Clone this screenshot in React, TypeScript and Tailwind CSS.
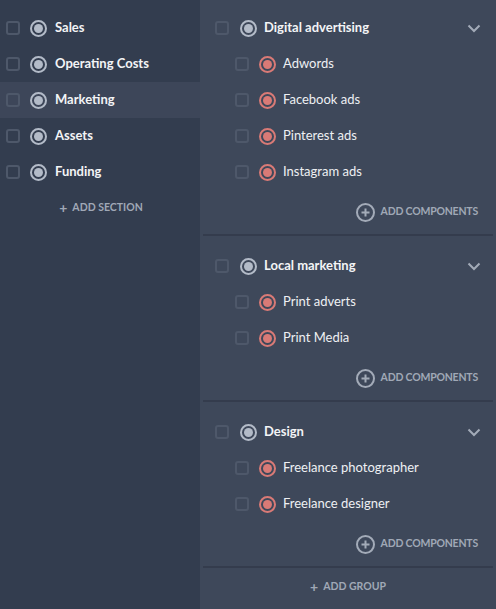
import React from "react";

const Check = () => (
  <div className="w-[14px] h-[14px] rounded-[3px] border-2 border-[#4e586a] shrink-0" />
);

const Radio = ({ red }: { red?: boolean }) => (
  <div
    className={`w-[17px] h-[17px] rounded-full border-2 flex items-center justify-center shrink-0 ${
      red ? "border-[#d97a76]" : "border-[#b3bbc8]"
    }`}
  >
    <div className={`w-[9px] h-[9px] rounded-full ${red ? "bg-[#d97a76]" : "bg-[#b3bbc8]"}`} />
  </div>
);

const Chevron = () => (
  <svg width="14" height="9" viewBox="0 0 14 9" className="shrink-0">
    <path d="M1.5 1.5 L7 7 L12.5 1.5" fill="none" stroke="#a3abb8" strokeWidth="2" />
  </svg>
);

const sections = ["Sales", "Operating Costs", "Marketing", "Assets", "Funding"];

const groups = [
  { name: "Digital advertising", items: ["Adwords", "Facebook ads", "Pinterest ads", "Instagram ads"] },
  { name: "Local marketing", items: ["Print adverts", "Print Media"] },
  { name: "Design", items: ["Freelance photographer", "Freelance designer"] },
];

export default function App() {
  return (
    <div
      className="w-[496px] h-[609px] flex overflow-hidden"
      style={{ fontFamily: "Lato, 'Noto Sans', sans-serif" }}
    >
      <div className="w-[200px] bg-[#333d4f] pt-[10px] flex flex-col">
        {sections.map((s) => (
          <div
            key={s}
            className={`h-9 flex items-center pl-[6px] ${s === "Marketing" ? "bg-[#3d4659]" : ""}`}
          >
            <Check />
            <div className="ml-[10px]">
              <Radio />
            </div>
            <span className="ml-[8px] text-[13px] font-bold text-[#f3f4f6]">{s}</span>
          </div>
        ))}
        <div className="h-9 flex items-center justify-center pl-[2px] text-[10.5px] font-bold text-[#a0a8b6]">
          <span className="text-[14px] mr-[5px] leading-none">+</span>ADD SECTION
        </div>
      </div>
      <div className="flex-1 bg-[#3e485a] flex flex-col">
        {groups.map((g, gi) => (
          <div
            key={g.name}
            className={`${gi === 0 ? "pt-[10px]" : "pt-[12px]"} border-b-2 border-[#343c4d] mx-[3px]`}
          >
            <div className="h-9 flex items-center pl-[12px] pr-[12px]">
              <Check />
              <div className="ml-[11px]">
                <Radio />
              </div>
              <span className="ml-[7px] text-[13px] font-bold text-[#f3f4f6] flex-1">{g.name}</span>
              <Chevron />
            </div>
            {g.items.map((it) => (
              <div key={it} className="h-9 flex items-center pl-[32px]">
                <Check />
                <div className="ml-[10px]">
                  <Radio red />
                </div>
                <span className="ml-[7px] text-[13px] text-[#eef0f3]">{it}</span>
              </div>
            ))}
            <div className="h-[44px] flex items-center justify-end pr-[15px]">
              <div className="w-[19px] h-[19px] rounded-full border-2 border-[#a3abb8] flex items-center justify-center">
                <svg width="9" height="9" viewBox="0 0 9 9">
                  <path d="M4.5 0.5 V8.5 M0.5 4.5 H8.5" stroke="#a3abb8" strokeWidth="2" />
                </svg>
              </div>
              <span className="ml-[6px] text-[10.5px] font-bold text-[#a0a8b6] tracking-[-0.2px]">
                ADD COMPONENTS
              </span>
            </div>
          </div>
        ))}
        <div className="h-[38px] flex items-center justify-center text-[10.5px] font-bold text-[#a0a8b6]">
          <span className="text-[14px] mr-[5px] leading-none">+</span>ADD GROUP
        </div>
      </div>
    </div>
  );
}
